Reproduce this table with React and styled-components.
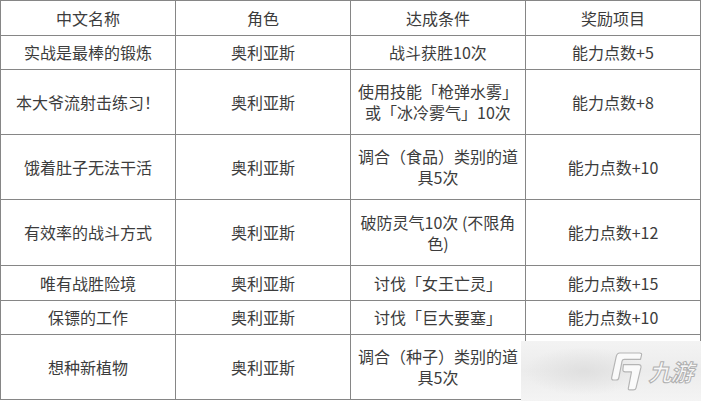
import React from "react";
import styled, { createGlobalStyle } from "styled-components";

const rows = [
  { name: "实战是最棒的锻炼", cond: "战斗获胜10次", reward: "能力点数+5", h: 34 },
  { name: "本大爷流射击练习！", cond: "使用技能「枪弹水雾」或「冰冷雾气」10次", reward: "能力点数+8", h: 65 },
  { name: "饿着肚子无法干活", cond: "调合（食品）类别的道具5次", reward: "能力点数+10", h: 65 },
  { name: "有效率的战斗方式", cond: "破防灵气10次 (不限角色)", reward: "能力点数+12", h: 66 },
  { name: "唯有战胜险境", cond: "讨伐「女王亡灵」", reward: "能力点数+15", h: 35 },
  { name: "保镖的工作", cond: "讨伐「巨大要塞」", reward: "能力点数+10", h: 34 },
  { name: "想种新植物", cond: "调合（种子）类别的道具5次", reward: "", h: 65 },
];

const App = () => {
  return (
    <Wrapper>
      <GlobalStyle />
      <Table>
        <colgroup>
          <col style={{ width: 175 }} />
          <col style={{ width: 175 }} />
          <col style={{ width: 175 }} />
          <col style={{ width: 175 }} />
        </colgroup>
        <thead>
          <Row h={35}>
            <HeadCell>中文名称</HeadCell>
            <HeadCell>角色</HeadCell>
            <HeadCell>达成条件</HeadCell>
            <HeadCell>奖励项目</HeadCell>
          </Row>
        </thead>
        <tbody>
          {rows.map((item) => (
            <Row key={item.name} h={item.h}>
              <Cell>{item.name}</Cell>
              <Cell>奥利亚斯</Cell>
              <Cell>{item.cond}</Cell>
              <Cell>{item.reward}</Cell>
            </Row>
          ))}
        </tbody>
      </Table>
      <Watermark>
        <svg width="36" height="46" viewBox="0 0 40 46">
          <path
            d="M12 3 L34 3 Q37 3 36 6 L35 10 L17 10 Q15 10 14.5 12 L11 30 Q10.5 33 8 33 L5 33 Q2.5 33 3 30 L8 7 Q9 3 12 3 Z M16 16 L33 16 Q36 16 35.5 19 L30 42 Q29.5 44 27 44 L23 44 Q21 44 21.5 42 L25 24 L18 24 Q15 24 15.5 21 L16 16 Z"
            fill="#fafafa"
            stroke="#b5b5b5"
            strokeWidth="1.3"
            strokeLinejoin="round"
          />
        </svg>
        <Brand>九游</Brand>
      </Watermark>
    </Wrapper>
  );
};

export default App;

const GlobalStyle = createGlobalStyle`
  body {
    margin: 0;
    background: #ffffff;
    font-family: "Microsoft YaHei", "Noto Sans CJK SC", "Noto Sans", sans-serif;
  }
`;

const Wrapper = styled.div`
  position: relative;
  width: 701px;
  height: 401px;
  overflow: hidden;
`;

const Table = styled.table`
  width: 700px;
  border-collapse: collapse;
  table-layout: fixed;
  color: #3c3c3c;
  font-size: 16px;
  line-height: 21px;
`;

const Row = styled.tr`
  height: ${(p) => p.h}px;
`;

const HeadCell = styled.th`
  border: 1px solid #868686;
  font-weight: 400;
  padding: 0 7px;
  text-align: center;
  vertical-align: middle;
`;

const Cell = styled.td`
  border: 1px solid #868686;
  padding: 0 7px;
  text-align: center;
  vertical-align: middle;
`;

const Watermark = styled.div`
  position: absolute;
  left: 521px;
  top: 341px;
  width: 180px;
  height: 60px;
  display: flex;
  align-items: center;
  justify-content: flex-end;
  gap: 6px;
  padding-right: 6px;
  box-sizing: border-box;
  background: radial-gradient(
      ellipse 60px 24px at 35% 50%,
      rgba(222, 222, 222, 0.9),
      rgba(236, 236, 236, 0) 100%
    ),
    linear-gradient(180deg, #f3f3f3, #ececec 50%, #f4f4f4);
`;

const Brand = styled.span`
  display: inline-block;
  font-family: "Noto Sans CJK SC", sans-serif;
  font-size: 23px;
  font-weight: 700;
  color: #f8f8f8;
  -webkit-text-stroke: 1px #b0b0b0;
  transform: skewX(-14deg);
  letter-spacing: -1px;
`;
